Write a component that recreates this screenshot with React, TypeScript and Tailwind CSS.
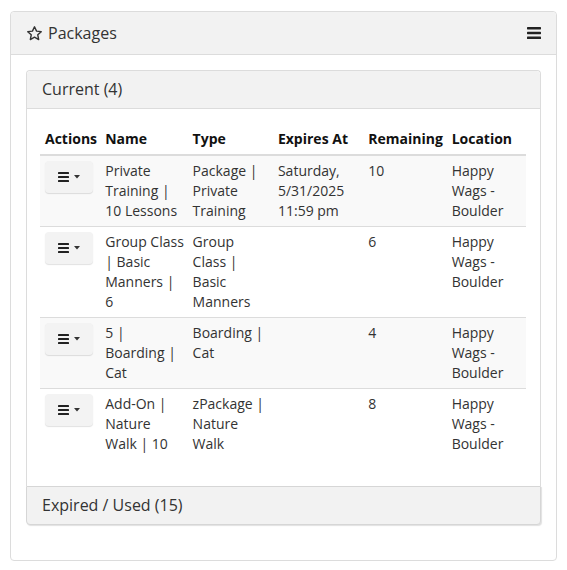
import React from 'react';

interface Pkg {
  name: string;
  type: string;
  expires: string[];
  remaining: string;
}

const packages: Pkg[] = [
  {
    name: 'Private Training | 10 Lessons',
    type: 'Package | Private Training',
    expires: ['Saturday,', '5/31/2025', '11:59 pm'],
    remaining: '10',
  },
  {
    name: 'Group\u00a0Class | Basic Manners | 6',
    type: 'Group Class | Basic Manners',
    expires: [],
    remaining: '6',
  },
  {
    name: '5 | Boarding | Cat',
    type: 'Boarding | Cat',
    expires: [],
    remaining: '4',
  },
  {
    name: 'Add-On | Nature Walk | 10',
    type: 'zPackage | Nature Walk',
    expires: [],
    remaining: '8',
  },
];

function StarIcon() {
  return (
    <svg width="17" height="17" viewBox="0 0 24 24" className="shrink-0">
      <polygon
        points="12,2.5 14.9,8.6 21.5,9.4 16.6,13.9 17.9,20.5 12,17.2 6.1,20.5 7.4,13.9 2.5,9.4 9.1,8.6"
        fill="none"
        stroke="#333"
        strokeWidth="2"
        strokeLinejoin="round"
      />
    </svg>
  );
}

function BarsIcon({ w, h, t }: { w: number; h: number; t: number }) {
  const gap = (h - t * 3) / 2;
  return (
    <svg width={w} height={h} viewBox={`0 0 ${w} ${h}`}>
      <rect x="0" y="0" width={w} height={t} rx="0.6" fill="#222" />
      <rect x="0" y={t + gap} width={w} height={t} rx="0.6" fill="#222" />
      <rect x="0" y={2 * (t + gap)} width={w} height={t} rx="0.6" fill="#222" />
    </svg>
  );
}

function ActionButton() {
  return (
    <button className="flex h-[32px] w-[48px] items-center justify-center gap-[5px] rounded-[4px] bg-[#f3f3f3] shadow-[0_1px_1px_rgba(0,0,0,0.12)]">
      <BarsIcon w={11} h={10} t={2} />
      <svg width="6" height="4" viewBox="0 0 6 4">
        <polygon points="0,0 6,0 3,3.5" fill="#333" />
      </svg>
    </button>
  );
}

export default function App() {
  return (
    <div className="bg-white px-[10px] pt-[11px] pb-[10px] font-['Open_Sans',sans-serif] text-[14px] leading-[20px] text-[#333]">
      <div className="rounded-[4px] border border-[#dcdcdc] bg-white">
        <div className="flex items-center justify-between rounded-t-[4px] border-b border-[#dcdcdc] bg-[#f2f2f2] px-[15px] py-[10px]">
          <div className="flex items-center gap-[5px] text-[16px] leading-[22px]">
            <StarIcon />
            <span>Packages</span>
          </div>
          <BarsIcon w={14} h={12} t={2.4} />
        </div>

        <div className="p-[15px]">
          <div className="mb-[20px]">
            <div className="rounded-t-[4px] border border-b-0 border-[#dcdcdc]">
              <div className="rounded-t-[4px] border-b border-[#dcdcdc] bg-[#f2f2f2] px-[15px] py-[10px] text-[16px] leading-[17px]">
                Current (4)
              </div>
              <div className="pt-[15px] pr-[14px] pb-[15px] pl-[13px]">
                <table className="mb-[12px] w-full table-fixed border-collapse">
                  <colgroup>
                    <col className="w-[60px]" />
                    <col className="w-[87px]" />
                    <col className="w-[85px]" />
                    <col className="w-[90px]" />
                    <col className="w-[83px]" />
                    <col className="w-[79px]" />
                  </colgroup>
                  <thead>
                    <tr>
                      {['Actions', 'Name', 'Type', 'Expires At', 'Remaining', 'Location'].map(h => (
                        <th
                          key={h}
                          className="whitespace-nowrap border-b-2 border-[#dcdcdc] p-[5px] text-left align-bottom font-bold text-[#111]"
                        >
                          {h}
                        </th>
                      ))}
                    </tr>
                  </thead>
                  <tbody>
                    {packages.map((p, i) => (
                      <tr key={i} className={i % 2 === 0 ? 'bg-[#f9f9f9]' : 'bg-white'}>
                        <td className={`p-[5px] align-top ${i > 0 ? 'border-t border-[#dcdcdc]' : ''}`}>
                          <ActionButton />
                        </td>
                        <td className={`p-[5px] align-top ${i > 0 ? 'border-t border-[#dcdcdc]' : ''}`}>
                          {p.name}
                        </td>
                        <td className={`p-[5px] align-top ${i > 0 ? 'border-t border-[#dcdcdc]' : ''}`}>
                          {p.type}
                        </td>
                        <td className={`p-[5px] align-top ${i > 0 ? 'border-t border-[#dcdcdc]' : ''}`}>
                          {p.expires.map(l => (
                            <div key={l}>{l}</div>
                          ))}
                        </td>
                        <td className={`p-[5px] align-top ${i > 0 ? 'border-t border-[#dcdcdc]' : ''}`}>
                          {p.remaining}
                        </td>
                        <td className={`p-[5px] align-top ${i > 0 ? 'border-t border-[#dcdcdc]' : ''}`}>
                          Happy Wags - Boulder
                        </td>
                      </tr>
                    ))}
                  </tbody>
                </table>
              </div>
            </div>
            <div className="rounded-b-[4px] border border-[#d6d6d6] bg-[#f2f2f2] px-[15px] py-[10px] text-[16px] leading-[17px] shadow-[1px_1px_1px_rgba(0,0,0,0.12)]">
              Expired / Used (15)
            </div>
          </div>
        </div>
      </div>
    </div>
  );
}
